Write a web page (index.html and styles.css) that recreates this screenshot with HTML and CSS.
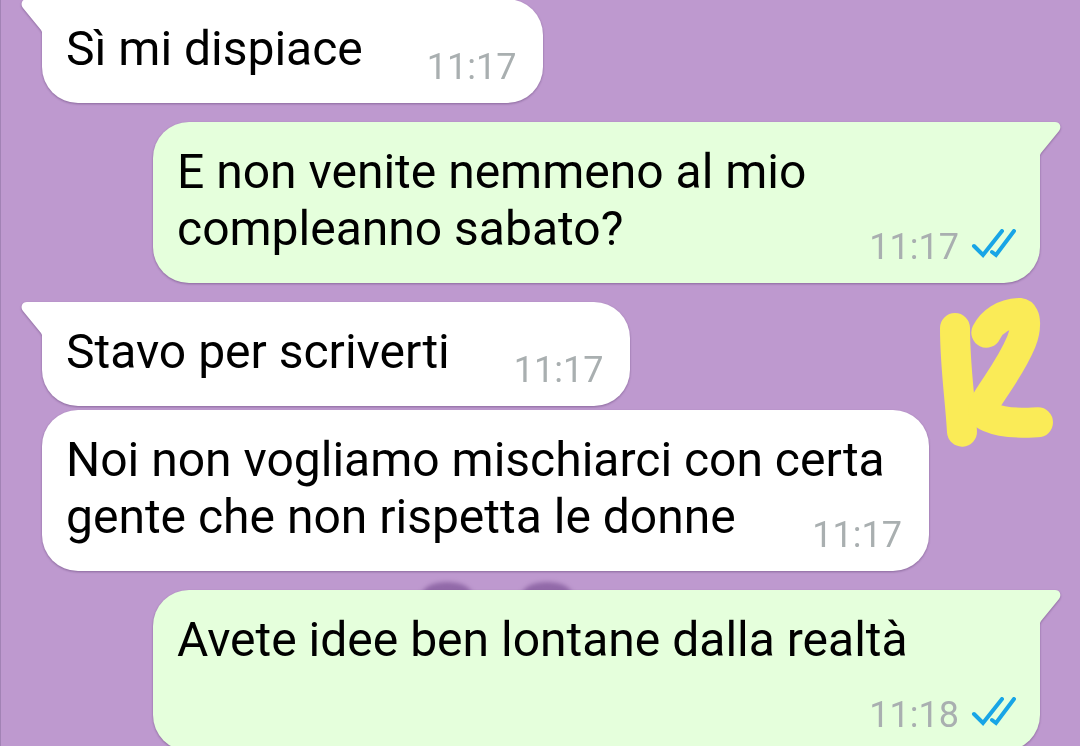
FILE: index.html
```
<!DOCTYPE html>
<html lang="it">
<head>
  <meta charset="UTF-8" />
  <meta name="viewport" content="width=device-width, initial-scale=1" />
  <title>Chat</title>
  <link rel="stylesheet" href="styles.css">
</head>
<body>
  <main class="chat">
    <svg class="wallpaper" width="200" height="30" viewBox="0 0 200 30" aria-hidden="true">
      <ellipse cx="67" cy="27" rx="26" ry="14" />
      <ellipse cx="167" cy="27" rx="26" ry="14" />
    </svg>

    <div class="message received tail">
      Sì mi dispiace
      <span class="meta"><time>11:17</time></span>
    </div>

    <div class="message sent tail">
      E non venite nemmeno al mio compleanno sabato?
      <span class="meta">
        <time>11:17</time>
        <svg class="ticks" width="45" height="30" viewBox="0 0 45 30" role="img" aria-label="Letto">
          <path d="M3 17 L12 26 L31 2 M21 23 L25 26 L43 2" />
        </svg>
      </span>
    </div>

    <div class="message received tail">
      Stavo per scriverti
      <span class="meta"><time>11:17</time></span>
    </div>

    <div class="message received grouped">
      Noi non vogliamo mischiarci con certa gente che non rispetta le donne
      <span class="meta"><time>11:17</time></span>
    </div>

    <div class="message sent tail">
      Avete idee ben lontane dalla realtà
      <span class="meta">
        <time>11:18</time>
        <svg class="ticks" width="45" height="30" viewBox="0 0 45 30" role="img" aria-label="Letto">
          <path d="M3 17 L12 26 L31 2 M21 23 L25 26 L43 2" />
        </svg>
      </span>
    </div>

    <!-- marker drawing -->
    <svg class="scribble" width="140" height="160" viewBox="0 0 420 480" aria-hidden="true">
      <path d="M105 114 C105 230 120 320 126 425" />
      <path d="M199 128 C215 95 250 71 298 69 C322 72 318 120 304 155 C275 225 235 275 202 328 C185 360 185 372 208 382 C240 396 270 398 305 398 C325 399 340 397 354 397" />
    </svg>
  </main>
</body>
</html>
```
FILE: styles.css
```
body {
  margin: 0;
  background-color: #be99cf;
  font-family: Roboto, sans-serif;
  color: #000;
}

.chat {
  position: relative;
  box-sizing: border-box;
  height: 100vh;
  overflow: hidden;
  display: flex;
  flex-direction: column;
  gap: 19px;
  padding: 0 40px 0 41px;
  border-left: 1px solid #a283b5;
}

.message {
  position: relative;
  display: flow-root;
  flex-shrink: 0;
  box-sizing: border-box;
  max-width: 887px;
  padding: 21px 27px 15px 24px;
  border-radius: 36px;
  font-size: 48px;
  line-height: 57px;
  filter: drop-shadow(0 1px 1px rgba(60, 30, 80, 0.4));
}

.message:first-of-type {
  margin-top: -1px;
}

.received {
  align-self: flex-start;
  background-color: #fff;
}

.sent {
  align-self: flex-end;
  padding-right: 24px;
  background-color: #e5ffdc;
}

.grouped {
  margin-top: -15px;
}

.received.tail {
  border-top-left-radius: 0;
}

.sent.tail {
  border-top-right-radius: 0;
}

.tail::before {
  content: "";
  position: absolute;
  top: 0;
  width: 22px;
  height: 34px;
  background-color: inherit;
  clip-path: path("M0 0 H15 C20 0 22 5 19 9 L1 31 L0 33 Z");
}

.sent.tail::before {
  left: 100%;
}

.received.tail::before {
  right: 100%;
  transform: scaleX(-1);
}

.meta {
  float: right;
  display: flex;
  align-items: center;
  gap: 12px;
  margin: 26px 0 0 64px;
  font-size: 36px;
  line-height: 42px;
  color: #a9afb0;
}

.ticks {
  margin-bottom: 6px;
}

.ticks path {
  fill: none;
  stroke: #18a5e6;
  stroke-width: 4;
  stroke-linecap: round;
}

.wallpaper {
  position: absolute;
  left: 379px;
  top: 569px;
  fill: #9169a8;
  filter: blur(2px);
}

.scribble {
  position: absolute;
  right: 20px;
  top: 290px;
  fill: none;
  stroke: #faeb57;
  stroke-width: 90;
  stroke-linecap: round;
  stroke-linejoin: round;
}
```
